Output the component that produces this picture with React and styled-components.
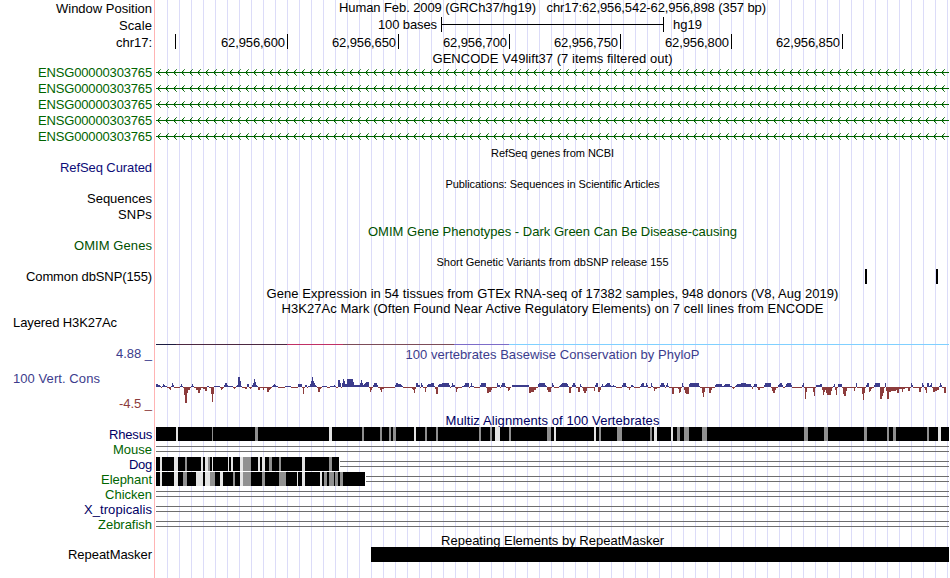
import React, { useLayoutEffect, useRef, useState } from 'react';
import styled, { createGlobalStyle } from 'styled-components';

const GlobalStyle = createGlobalStyle`
  body { margin: 0; background: #fff; overflow: hidden; }
`;

const C = {
  black: '#000000', green: '#006400', navy: '#0c0c78', omim: '#005000',
  cons: '#3c3c8c', red: '#8c3c3c', species: '#000064', grid: '#dcdcf8',
};

const Browser = styled.main`
  width: 949px;
  height: 578px;
  overflow: hidden;
  font: 13px/16px "Liberation Sans", Arial, sans-serif;
  color: ${C.black};
  background:
    linear-gradient(#ffb4b4, #ffb4b4) 154px 0 / 1px 100% no-repeat,
    repeating-linear-gradient(to right, ${C.grid} 0 1px, transparent 1px 12px) 167px 0 / 782px 100% no-repeat;
`;

const Row = styled.div`
  display: grid;
  grid-template-columns: 153px 793px;
  column-gap: 3px;
  height: ${p => p.$h}px;
  line-height: ${p => p.$lh || 16}px;
`;

const Label = styled.div`
  display: flex;
  justify-content: ${p => (p.$left ? 'flex-start' : 'flex-end')};
  padding: ${p => (p.$tight ? 0 : 1)}px 1px 0 13px;
  color: ${p => p.$color || C.black};
  white-space: pre;
`;

const LabelStack = styled.div`
  display: flex;
  flex-direction: column;
  gap: 8px;
`;

const Title = styled.div`
  display: flex;
  justify-content: center;
  padding-top: ${p => p.$drop ?? 1}px;
  font-size: ${p => (p.$small ? 11 : 13)}px;
  color: ${p => p.$color || C.black};
  white-space: pre;
`;

const TextRun = styled.span`
  display: block;
  flex: none;
  white-space: pre;
`;

const Track = styled.svg`
  display: block;
  height: ${p => p.$h}px;
  width: 793px;
  shape-rendering: crispEdges;
`;

const ScaleBar = styled.div`
  display: grid;
  grid-template-columns: 281px 223px 1fr;
  column-gap: 4px;
`;

const ScaleLine = styled.div`
  box-sizing: border-box;
  height: 15px;
  border: solid #000;
  border-width: 0 1px;
  background: linear-gradient(#000, #000) 0 7px / 100% 1px no-repeat;
`;

const ScaleStart = styled.div`
  display: flex;
  justify-content: flex-end;
`;

const ScaleEnd = styled.div`
  display: flex;
  padding-left: 5px;
`;

const Ruler = styled.div`
  display: grid;
  grid-template-columns: 20px 112px repeat(5, 111px);
`;

const Tick = styled.div`
  display: flex;
  justify-content: flex-end;
  box-sizing: border-box;
  height: 15px;
  padding: 1px 2px 0 0;
  border-right: 1px solid #000;
`;

const SignalRow = styled.div`
  display: flex;
  padding-top: 30px;
`;

const Signal = styled.div`
  width: ${p => p.$w}px;
  height: 1px;
  background: ${p => p.$color};
`;

// Spreads a line of text over a fixed advance width.
function Fit({ w, children }) {
  const ref = useRef(null);
  const [spacing, setSpacing] = useState(0);
  useLayoutEffect(() => {
    const natural = ref.current.getBoundingClientRect().width;
    setSpacing((w - natural) / children.length);
  }, []);
  return <TextRun ref={ref} style={{ letterSpacing: `${spacing}px` }}>{children}</TextRun>;
}

function TitleRow({ h, text, w, color, small }) {
  return (
    <Row $h={h}>
      <span />
      <Title $color={color} $small={small}><Fit w={w}>{text}</Fit></Title>
    </Row>
  );
}

function LabelRow({ h, text, w, color, left, children, lh }) {
  return (
    <Row $h={h} $lh={lh}>
      <Label $color={color} $left={left} $tight={lh === 15}><Fit w={w}>{text}</Fit></Label>
      {children}
    </Row>
  );
}

const chevrons = Array.from({ length: 99 }, (_, i) => 1 + i * 8);

function GeneTrack() {
  return (
    <Track $h={16} viewBox="0 0 793 16">
      <rect x="0" y="8" width="793" height="1" fill={C.green} />
      {chevrons.map(x => (
        <g key={x} fill={C.green}>
          <path d={`M${x + 1} 7h1v1h-1zM${x + 1} 9h1v1h-1z`} />
          <path opacity=".95" d={`M${x + 2} 6h1v1h-1zM${x + 2} 10h1v1h-1z`} />
          <path opacity=".7" d={`M${x + 3} 5h1v1h-1zM${x + 3} 11h1v1h-1z`} />
          <path opacity=".3" d={`M${x + 2} 7h1v1h-1zM${x + 2} 9h1v1h-1z`} />
        </g>
      ))}
    </Track>
  );
}

// Score runs as height:width, each group starting at its own position.
const scores = [
  [156, '3:2 2:2 1:1 -1:1 1:1 3:1 2:1 1:2 -1:2 -2:1 -3:1 1:1 4:1 2:1 -1:6 1:1 3:1 1:1 -1:1 -8:1 -16:2 -6:1 -3:2 -1:1 1:1 3:1 1:1 -1:2 -3:2 -6:2 -3:1 -1:2 -2:2 -4:2 1:2 -1:2 -7:1 -15:1 -7:1 1:6'],
  [220, '-1:1 -3:1 -2:1 -1:1 2:1 4:2 2:1 1:5 -1:1 -2:1 -1:1 1:1 2:1 10:2 6:1 1:1 -1:3 -2:2 3:2 -1:1 -2:1 -1:1 2:1 4:1 8:1 5:1 2:1 1:1 -3:2 -1:3 -3:1 -1:3 -5:2 -3:1 -2:1 -1:1'],
  [272, '1:1 2:1 3:1 2:1 1:2 -1:7 1:6 -1:7 3:4 -1:1 -7:1 -1:1 2:2 -1:1 1:2 3:1 6:1 10:1 6:1 4:1 2:1 1:1 -1:1 -5:2 -2:1 -1:1 1:5 -1:3 1:4 2:1 1:1 -1:2 7:2 4:1 -1:1 4:1 8:1 6:1 3:2 8:3'],
  [350, '8:3 5:1 2:6 4:1 7:1 4:1 2:1 3:1 4:1 5:3 -1:1 -5:1 -3:1 -1:1 2:1 4:3 2:1 -1:2 -3:1 -5:1 -2:2 -1:11 2:1 4:2 3:3 2:1 1:1 -1:9 -2:1 -3:1 -6:1 -2:1 4:2 2:2 -1:1 4:1 2:1 -1:2 -5:1 -1:1'],
  [427, '2:1 3:3 4:3 1:1 -2:1 -7:2 2:1 3:3 4:7 2:1 -1:1 1:1 4:1 2:2 -1:1 -5:1 -2:1 -1:4 1:2 2:1 4:4 -1:1 1:1 4:1 1:2 -1:6 2:1 4:5 -1:1 -6:2 -5:2 -3:1 -1:5 4:1 2:2 -1:1 2:1 4:3 1:1 -1:2 -4:1 -3:1 -1:1'],
  [512, '2:17 -6:2 -5:3 -3:2 -1:2 3:1 4:6 2:1 1:1 -3:1 -5:2'],
  [550, '-5:1 -1:1 4:1 2:1 -1:5 1:1 2:1 3:1 4:5 3:1 1:1 -6:2 -1:1 2:1 4:2 2:1 -1:2 -5:2 3:1 1:1 -1:1 -4:1 -6:2 -4:1 -1:7 -4:1 2:1 4:2 -5:2 -3:1 1:1 3:1 1:2 2:1 3:1 4:3 2:1 1:2 2:1 1:2 -1:6 2:1 4:3 1:1 -1:2 -3:1 -1:1 2:2 1:1 -1:6 1:1 3:1 4:2 1:1 1:1 4:1 2:1'],
  [648, '-1:3 4:1 1:1 -1:1 -4:1 -2:2 -1:3 2:1 4:3 2:1 -1:1 2:1 4:1 1:1 -1:3 -7:2 -1:4 -2:1 -6:1 -5:1 -1:1 4:1 1:1 -3:1 -6:1 -7:3 3:1 4:9 1:1 -1:2 -6:1 -10:1 -5:1 -1:4 -6:2 -3:1 -1:3'],
  [715, '2:1 3:6 1:2 2:1 3:5 1:2 -1:1 -2:1 -1:1 1:1 2:1 3:4 4:5 3:4'],
  [750, '3:1 1:1 -2:1 1:1 3:3 -1:1 -3:2 -1:4 2:1 4:6 -1:1 -4:1 -6:2 -3:1 -1:2 2:1 3:1 4:2 2:1 -1:2 1:1 3:1 4:4 2:1 -1:10 2:1 4:1 -1:1 -12:1 -5:1 -1:6 -5:1 -9:1 -1:1 2:4 3:2 -3:1 -8:1 -5:1 -3:1 -6:1 -8:4 -4:1 -1:1 1:1 3:1 -3:1 -8:1 -1:1'],
  [838, '3:4 -1:1 -7:1 -9:2 -4:1 -1:7 -4:1 -1:1 4:1 -1:5 -7:1 -13:1 -6:1 -1:1 2:1 4:2 -5:1 -4:1 -2:1 -1:2 2:1 4:5 -12:2 -9:1 -6:1 -1:1 4:1 -4:1 -12:2 -5:2 -4:5 -3:1 -6:2 -2:3 -5:1 -2:2 -1:3 -4:2 -1:1 4:1 2:1 -1:6 -5:2 -1:1 4:1 2:1 -1:1 -3:1 -6:1 4:2 1:1 2:1 4:1 -1:1 -5:2 -4:2 -3:2 1:1 4:1 2:1 -1:2 -6:2'],
];

const bars = scores.flatMap(([start, runs]) => {
  let x = start - 156;
  return runs.split(' ').map(run => {
    const [v, w] = run.split(':').map(Number);
    const bar = { x, v, w };
    x += w;
    return bar;
  });
});

function ScoreTrack() {
  return (
    <Track $h={49} viewBox="0 0 793 49">
      {bars.map(({ x, v, w }) => (
        <rect key={x} x={x} y={v > 0 ? 24 - v : 24} width={w}
          height={Math.abs(v)} fill={v > 0 ? C.cons : C.red} />
      ))}
    </Track>
  );
}

const L = '#e4e4e4';
const G = '#909090';
const rhesus = [
  [176, 2, L], [212, 1, G], [255, 3, G], [329, 3, L], [362, 2, G], [380, 2, G], [389, 2, G], [393, 3, G],
  [414, 2, L], [425, 2, G], [436, 2, G], [479, 2, G], [490, 2, G], [495, 5, L], [509, 2, G], [547, 4, G],
  [554, 2, L], [594, 2, L], [599, 2, G], [617, 5, G], [650, 2, G], [654, 3, L], [671, 2, L], [677, 3, G],
  [684, 5, G], [702, 5, G], [804, 4, G], [824, 4, G], [864, 3, G], [887, 2, G], [893, 3, G], [927, 2, G], [938, 3, L],
];
const dog = [
  [160, 2, L], [174, 4, L], [185, 2, G], [201, 2, L], [205, 3, L], [208, 2, G], [212, 1, L], [228, 1, L],
  [231, 2, L], [240, 3, L], [243, 8, G], [258, 2, L], [262, 3, L], [269, 3, G], [279, 2, G], [302, 3, L], [329, 3, G],
];
const elephant = [
  [160, 2, L], [174, 4, L], [183, 4, G], [196, 7, L], [205, 5, L], [210, 5, G], [220, 3, L], [233, 2, G],
  [240, 3, L], [243, 8, G], [262, 3, G], [279, 7, G], [297, 1, L], [302, 3, L], [320, 2, L], [324, 3, G],
  [329, 5, G], [335, 3, G], [340, 3, G],
];

function Alignment({ end = 156, marks = [] }) {
  const x = end - 156;
  const gap = x > 0 ? x + 1 : 0;
  return (
    <Track $h={15} viewBox="0 0 793 15">
      {end < 949 && <path fill="#6e6e6e" d={`M${gap} 4H793v1H${gap}zM${gap} 9H793v1H${gap}z`} />}
      {x > 0 && <rect width={x} height="14" fill="#000" />}
      {marks.map(([m, w, color]) => <rect key={m} x={m - 156} width={w} height="14" fill={color} />)}
    </Track>
  );
}

const species = [
  { name: 'Rhesus', w: 43, color: C.species, end: 949, marks: rhesus },
  { name: 'Mouse', w: 39, color: C.green },
  { name: 'Dog', w: 23, color: C.species, end: 339, marks: dog },
  { name: 'Elephant', w: 51, color: C.green, end: 365, marks: elephant },
  { name: 'Chicken', w: 47, color: C.green },
  { name: 'X_tropicalis', w: 68, color: C.species },
  { name: 'Zebrafish', w: 54, color: C.green },
];

export default function App() {
  return (
    <>
      <GlobalStyle />
      <Browser>
        <Row $h={17}>
          <Label><Fit w={96}>Window Position</Fit></Label>
          <Title $drop={0}><Fit w={427}>{'Human Feb. 2009 (GRCh37/hg19)   chr17:62,956,542-62,956,898 (357 bp)'}</Fit></Title>
        </Row>
        <LabelRow h={17} text="Scale" w={33}>
          <ScaleBar>
            <ScaleStart><Fit w={59}>100 bases</Fit></ScaleStart>
            <ScaleLine />
            <ScaleEnd><Fit w={29}>hg19</Fit></ScaleEnd>
          </ScaleBar>
        </LabelRow>
        <LabelRow h={16} text="chr17:" w={36}>
          <Ruler>
            <Tick />
            {[600, 650, 700, 750, 800, 850].map(n => (
              <Tick key={n}><Fit w={64}>{`62,956,${n}`}</Fit></Tick>
            ))}
          </Ruler>
        </LabelRow>
        <TitleRow h={14} text="GENCODE V49lift37 (7 items filtered out)" w={240} />
        {[0, 1, 2, 3, 4].map(i => (
          <LabelRow key={i} h={16} text="ENSG00000303765" w={114} color={C.green}><GeneTrack /></LabelRow>
        ))}
        <TitleRow h={15} text="RefSeq genes from NCBI" w={123} small />
        <LabelRow h={16} text="RefSeq Curated" w={92} color={C.navy} />
        <TitleRow h={15} text="Publications: Sequences in Scientific Articles" w={214} small />
        <LabelRow h={16} text="Sequences" w={65} />
        <LabelRow h={17} text="SNPs" w={34} />
        <TitleRow h={14} text="OMIM Gene Phenotypes - Dark Green Can Be Disease-causing" w={369} color={C.omim} />
        <LabelRow h={16} text="OMIM Genes" w={78} color={C.omim} />
        <TitleRow h={15} text="Short Genetic Variants from dbSNP release 155" w={232} small />
        <LabelRow h={17} text="Common dbSNP(155)" w={126}>
          <Track $h={17} viewBox="0 0 793 17">
            <path fill="#000" d="M709 1h2v15h-2zM780 1h2v15h-2z" />
          </Track>
        </LabelRow>
        <TitleRow h={15} text="Gene Expression in 54 tissues from GTEx RNA-seq of 17382 samples, 948 donors (V8, Aug 2019)" w={572} />
        <TitleRow h={14} text="H3K27Ac Mark (Often Found Near Active Regulatory Elements) on 7 cell lines from ENCODE" w={542} />
        <LabelRow h={31} text="Layered H3K27Ac" w={104} left>
          <SignalRow>
            <Signal $w={20} $color="#1c1c40" />
            <Signal $w={111} $color="#4c2840" />
            <Signal $w={56} $color="#c03064" />
            <Signal $w={111} $color="#7c4c58" />
            <Signal $w={55} $color="#7c6cc8" />
            <Signal $w={440} $color="#80d0ff" />
          </SignalRow>
        </LabelRow>
        <Row $h={67}>
          <LabelStack>
            <Label $color={C.cons}><Fit w={36}>4.88 _</Fit></Label>
            <Label $color={C.cons} $left><Fit w={87}>100 Vert. Cons</Fit></Label>
            <Label $color={C.red}><Fit w={33}>-4.5 _</Fit></Label>
          </LabelStack>
          <div>
            <Title $color={C.cons} $drop={2}><Fit w={294}>100 vertebrates Basewise Conservation by PhyloP</Fit></Title>
            <ScoreTrack />
          </div>
        </Row>
        <TitleRow h={15} text="Multiz Alignments of 100 Vertebrates" w={214} color={C.species} />
        {species.map(s => (
          <LabelRow key={s.name} h={15} lh={15} text={s.name} w={s.w} color={s.color}>
            <Alignment end={s.end} marks={s.marks} />
          </LabelRow>
        ))}
        <TitleRow h={15} text="Repeating Elements by RepeatMasker" w={223} />
        <LabelRow h={15} lh={15} text="RepeatMasker" w={84}>
          <Track $h={15} viewBox="0 0 793 15"><rect x="215" width="578" height="15" fill="#000" /></Track>
        </LabelRow>
      </Browser>
    </>
  );
}
